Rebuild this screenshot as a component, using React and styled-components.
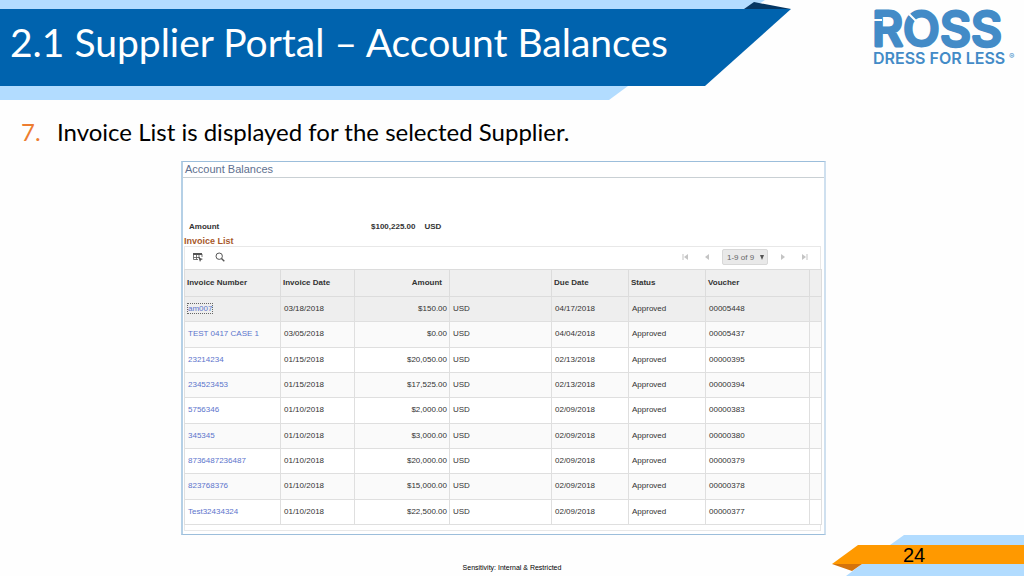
import React from 'react';
import styled, { createGlobalStyle } from 'styled-components';

const GlobalStyle = createGlobalStyle`
	* {
		box-sizing: border-box;
	}

	body {
		background: #fefefe;
		color: #333;
		font-family: 'Liberation Sans', Arial, sans-serif;
		margin: 0;
	}
`;

const Slide = styled.div`
	display: flex;
	flex-direction: column;
	min-height: 100vh;
`;

const Header = styled.header`
	display: grid;
	grid-template-columns: 1fr 233px;
`;

const Banner = styled.div`
	position: relative;
`;

const TopStrip = styled.div`
	background: #b2dcff;
	clip-path: polygon(0 0, 100% 0, calc(100% - 14px) 100%, 0 100%);
	height: 9px;
	margin-right: 26px;
`;

const Fold = styled.svg`
	display: block;
	position: absolute;
	right: 0;
	top: 2px;
`;

const Ribbon = styled.div`
	align-items: center;
	background: #0063ae;
	clip-path: polygon(0 0, 100% 0, calc(100% - 86px) 100%, 0 100%);
	display: flex;
	height: 77px;
	padding: 0 88px 12px 10px;
`;

const BottomStrip = styled.div`
	background: #b2dcff;
	clip-path: polygon(0 0, 100% 0, calc(100% - 19px) 100%, 0 100%);
	height: 14px;
	margin-right: 163px;
`;

const Title = styled.h1`
	color: white;
	font-family: Lato, sans-serif;
	font-size: 39px;
	font-weight: 400;
	line-height: 48px;
	margin: 0;
	white-space: nowrap;
`;

const LogoBox = styled.div`
	display: flex;
	justify-content: flex-end;
	padding: 8px 5px 0 0;

	svg {
		overflow: visible;
	}

	text {
		fill: #438bc7;
		font-family: Inter, sans-serif;
	}
`;

const Main = styled.main`
	padding: 0 198px 0 181px;
`;

const Steps = styled.ol`
	list-style: none;
	margin: 0 0 0 -160px;
	padding: 16px 0 13px;
`;

const Step = styled.li`
	color: black;
	display: grid;
	font-family: Lato, sans-serif;
	font-size: 24px;
	grid-template-columns: 36px 1fr;
	line-height: 32px;
	white-space: nowrap;
`;

const StepNumber = styled.span`
	color: #ed7d31;
`;

const Panel = styled.section`
	background: white;
	border: 1px solid #9cbedb;
	border-left: 2px solid #b5d0e6;
	border-right: 2px solid #cfe0ef;
	padding-bottom: 3px;
`;

const PanelTitle = styled.h2`
	border-bottom: 1px solid #c9d0d4;
	color: #60708f;
	font-size: 11px;
	font-weight: 400;
	line-height: 14px;
	margin: 0;
	padding: 0 2px 1px;
`;

const Summary = styled.div`
	color: #333;
	display: flex;
	font-size: 8px;
	font-weight: 700;
	line-height: 12px;
	padding: 43px 6px 3px;
`;

const SummaryLabel = styled.span`
	width: 182px;
`;

const Currency = styled.span`
	margin-left: 9px;
`;

const List = styled.div`
	padding: 0 3px 0 1px;
`;

const ListTitle = styled.h3`
	color: #a8592b;
	font-size: 9px;
	line-height: 10px;
	margin: 0;
`;

const Toolbar = styled.div`
	align-items: center;
	border: 1px solid #e8e8e8;
	border-bottom: 0;
	display: flex;
	height: 23px;
	justify-content: space-between;
	padding: 0 10px 2px 7px;
`;

const ToolGroup = styled.div`
	align-items: center;
	display: flex;
	gap: ${(props) => props.$gap}px;
`;

const IconButton = styled.button`
	align-items: center;
	background: none;
	border: 0;
	color: ${(props) => (props.disabled ? '#c4c4c4' : '#555')};
	display: flex;
	height: 14px;
	justify-content: center;
	padding: 0;
	width: 12px;
`;

const Pager = styled.div`
	position: relative;

	select {
		appearance: none;
		background: #e9e9e9;
		border: 1px solid #d8d8d8;
		border-radius: 2px;
		color: #666;
		display: block;
		font-family: inherit;
		font-size: 8px;
		height: 16px;
		padding: 0 12px 0 4px;
		width: 46px;
	}

	svg {
		pointer-events: none;
		position: absolute;
		right: 4px;
		top: 6px;
	}
`;

const Table = styled.table`
	border-collapse: collapse;
	color: #333;
	font-size: 8px;
	height: 256px;
	line-height: 10px;
	table-layout: fixed;
	width: 100%;
`;

const Col = styled.col`
	width: ${(props) => props.$width}px;
`;

const Th = styled.th`
	background: #efefef;
	border: 1px solid #dcdcdc;
	height: 27px;
	padding: 0 ${(props) => (props.$right ? 7 : 2)}px 1px;
	text-align: ${(props) => (props.$right ? 'right' : 'left')};
`;

const Row = styled.tr`
	background: ${(props) => (props.$selected ? '#eeeeee' : 'white')};

	&:nth-child(2n) {
		background: #fafafa;
	}
`;

const Td = styled.td`
	border: 1px solid #dfdfdf;
	height: 25px;
	padding: 0 2px 0 3px;
	text-align: ${(props) => (props.$right ? 'right' : 'left')};
	white-space: nowrap;
`;

const InvoiceLink = styled.a`
	color: #5b74cc;
	outline: ${(props) => (props.$focused ? '1px dotted #666' : 'none')};
	text-decoration: none;
`;

const TableEnd = styled.div`
	border: 1px solid #e8e8e8;
	border-top: 0;
	height: 6px;
`;

const Footer = styled.footer`
	align-items: end;
	display: grid;
	grid-template-columns: 192px 1fr 192px;
	margin-top: auto;
`;

const Sensitivity = styled.p`
	color: black;
	font-size: 7px;
	line-height: 10px;
	margin: 0;
	padding-bottom: 3px;
	text-align: center;
`;

const PageMark = styled.div`
	height: 41px;
	position: relative;

	svg {
		display: block;
	}
`;

const PageNumber = styled.span`
	color: black;
	font-size: 20px;
	left: 71px;
	line-height: 20px;
	position: absolute;
	top: 10px;
`;

const columns = [
	{ label: 'Invoice Number', width: 96 },
	{ label: 'Invoice Date', width: 74 },
	{ label: 'Amount', width: 95, right: true },
	{ label: '', width: 102 },
	{ label: 'Due Date', width: 77 },
	{ label: 'Status', width: 77 },
	{ label: 'Voucher', width: 104 },
	{ label: '', width: 12 },
];

const invoices = [
	['am007', '03/18/2018', '$150.00', '04/17/2018', '00005448'],
	['TEST 0417 CASE 1', '03/05/2018', '$0.00', '04/04/2018', '00005437'],
	['23214234', '01/15/2018', '$20,050.00', '02/13/2018', '00000395'],
	['234523453', '01/15/2018', '$17,525.00', '02/13/2018', '00000394'],
	['5756346', '01/10/2018', '$2,000.00', '02/09/2018', '00000383'],
	['345345', '01/10/2018', '$3,000.00', '02/09/2018', '00000380'],
	['8736487236487', '01/10/2018', '$20,000.00', '02/09/2018', '00000379'],
	['823768376', '01/10/2018', '$15,000.00', '02/09/2018', '00000378'],
	['Test32434324', '01/10/2018', '$22,500.00', '02/09/2018', '00000377'],
];

const Logo = () => (
	<svg width='146' height='60' viewBox='0 0 146 60'>
		<text
			x='-1'
			y='38'
			fontSize='48'
			fontWeight='500'
			stroke='#438bc7'
			strokeWidth='3'
			strokeLinejoin='round'
		>
			ROSS
		</text>
		<path d='M0 12H9M36 6L45 15' stroke='#fefefe' strokeWidth='2' />
		<text x='0' y='56' fontSize='16' fontWeight='600'>
			DRESS FOR LESS
		</text>
		<text x='136' y='51' fontSize='8'>
			®
		</text>
	</svg>
);

const GridIcon = () => (
	<svg width='10' height='9' viewBox='0 0 10 9'>
		<path d='M0 0H9V2H0Z' fill='currentColor' />
		<path
			d='M.5 1V6.5H5M9 1V4M.5 4.5H7M3.5 2V6.5M6 2V5'
			fill='none'
			stroke='currentColor'
			strokeWidth='.8'
		/>
		<path d='M5.5 4.5L10 6L8 7L7 9Z' fill='currentColor' />
	</svg>
);

const SearchIcon = () => (
	<svg width='10' height='10' viewBox='0 0 10 10' fill='none' stroke='currentColor'>
		<circle cx='4.2' cy='4.2' r='3.2' />
		<path d='M6.5 6.5L9.3 9.3' strokeWidth='1.4' />
	</svg>
);

const Arrow = ({ next, end }) => (
	<svg width='8' height='8' viewBox='0 0 8 8' fill='currentColor'>
		<path d={next ? 'M2 1L6 4L2 7Z' : 'M6 1L2 4L6 7Z'} />
		{end && <path d={next ? 'M6.5 1H7.5V7H6.5Z' : 'M.5 1H1.5V7H.5Z'} />}
	</svg>
);

const InvoiceTable = () => (
	<Table>
		<colgroup>
			{columns.map((column, i) => (
				<Col key={i} $width={column.width} />
			))}
		</colgroup>
		<thead>
			<tr>
				{columns.map((column, i) => (
					<Th key={i} $right={column.right}>
						{column.label}
					</Th>
				))}
			</tr>
		</thead>
		<tbody>
			{invoices.map(([number, date, amount, due, voucher], i) => (
				<Row key={number} $selected={i === 0}>
					<Td>
						<InvoiceLink href='#' $focused={i === 0}>
							{number}
						</InvoiceLink>
					</Td>
					<Td>{date}</Td>
					<Td $right>{amount}</Td>
					<Td>USD</Td>
					<Td>{due}</Td>
					<Td>Approved</Td>
					<Td>{voucher}</Td>
					<Td />
				</Row>
			))}
		</tbody>
	</Table>
);

const InvoiceToolbar = () => (
	<Toolbar>
		<ToolGroup $gap={10}>
			<IconButton aria-label='Grid actions'>
				<GridIcon />
			</IconButton>
			<IconButton aria-label='Find'>
				<SearchIcon />
			</IconButton>
		</ToolGroup>
		<ToolGroup $gap={9}>
			<IconButton aria-label='First' disabled>
				<Arrow end />
			</IconButton>
			<IconButton aria-label='Previous' disabled>
				<Arrow />
			</IconButton>
			<Pager>
				<select aria-label='Rows shown'>
					<option>1-9 of 9</option>
				</select>
				<svg width='4' height='5' viewBox='0 0 4 5'>
					<path d='M0 0H4L2 5Z' fill='#555' />
				</svg>
			</Pager>
			<IconButton aria-label='Next' disabled>
				<Arrow next />
			</IconButton>
			<IconButton aria-label='Last' disabled>
				<Arrow next end />
			</IconButton>
		</ToolGroup>
	</Toolbar>
);

export default function App() {
	return (
		<Slide>
			<GlobalStyle />
			<Header>
				<Banner>
					<TopStrip />
					<Ribbon>
						<Title>2.1 Supplier Portal – Account Balances</Title>
					</Ribbon>
					<BottomStrip />
					<Fold width='47' height='7' viewBox='0 0 47 7'>
						<path d='M0 7L10 0L47 7Z' fill='#063763' />
					</Fold>
				</Banner>
				<LogoBox>
					<Logo />
				</LogoBox>
			</Header>
			<Main>
				<Steps>
					<Step>
						<StepNumber>7.</StepNumber>
						<span>Invoice List is displayed for the selected Supplier.</span>
					</Step>
				</Steps>
				<Panel>
					<PanelTitle>Account Balances</PanelTitle>
					<Summary>
						<SummaryLabel>Amount</SummaryLabel>
						<span>$100,225.00</span>
						<Currency>USD</Currency>
					</Summary>
					<List>
						<ListTitle>Invoice List</ListTitle>
						<InvoiceToolbar />
						<InvoiceTable />
						<TableEnd />
					</List>
				</Panel>
			</Main>
			<Footer>
				<span />
				<Sensitivity>Sensitivity: Internal &amp; Restricted</Sensitivity>
				<PageMark>
					<svg width='192' height='41' viewBox='0 0 192 41'>
						<path d='M58 10L72 0H192V10ZM30 29H192V41H14Z' fill='#b2dcff' />
						<path d='M0 29H30L20 36Z' fill='#d4730b' />
						<path d='M26 10H192V29H0Z' fill='#ff9900' />
					</svg>
					<PageNumber>24</PageNumber>
				</PageMark>
			</Footer>
		</Slide>
	);
}
